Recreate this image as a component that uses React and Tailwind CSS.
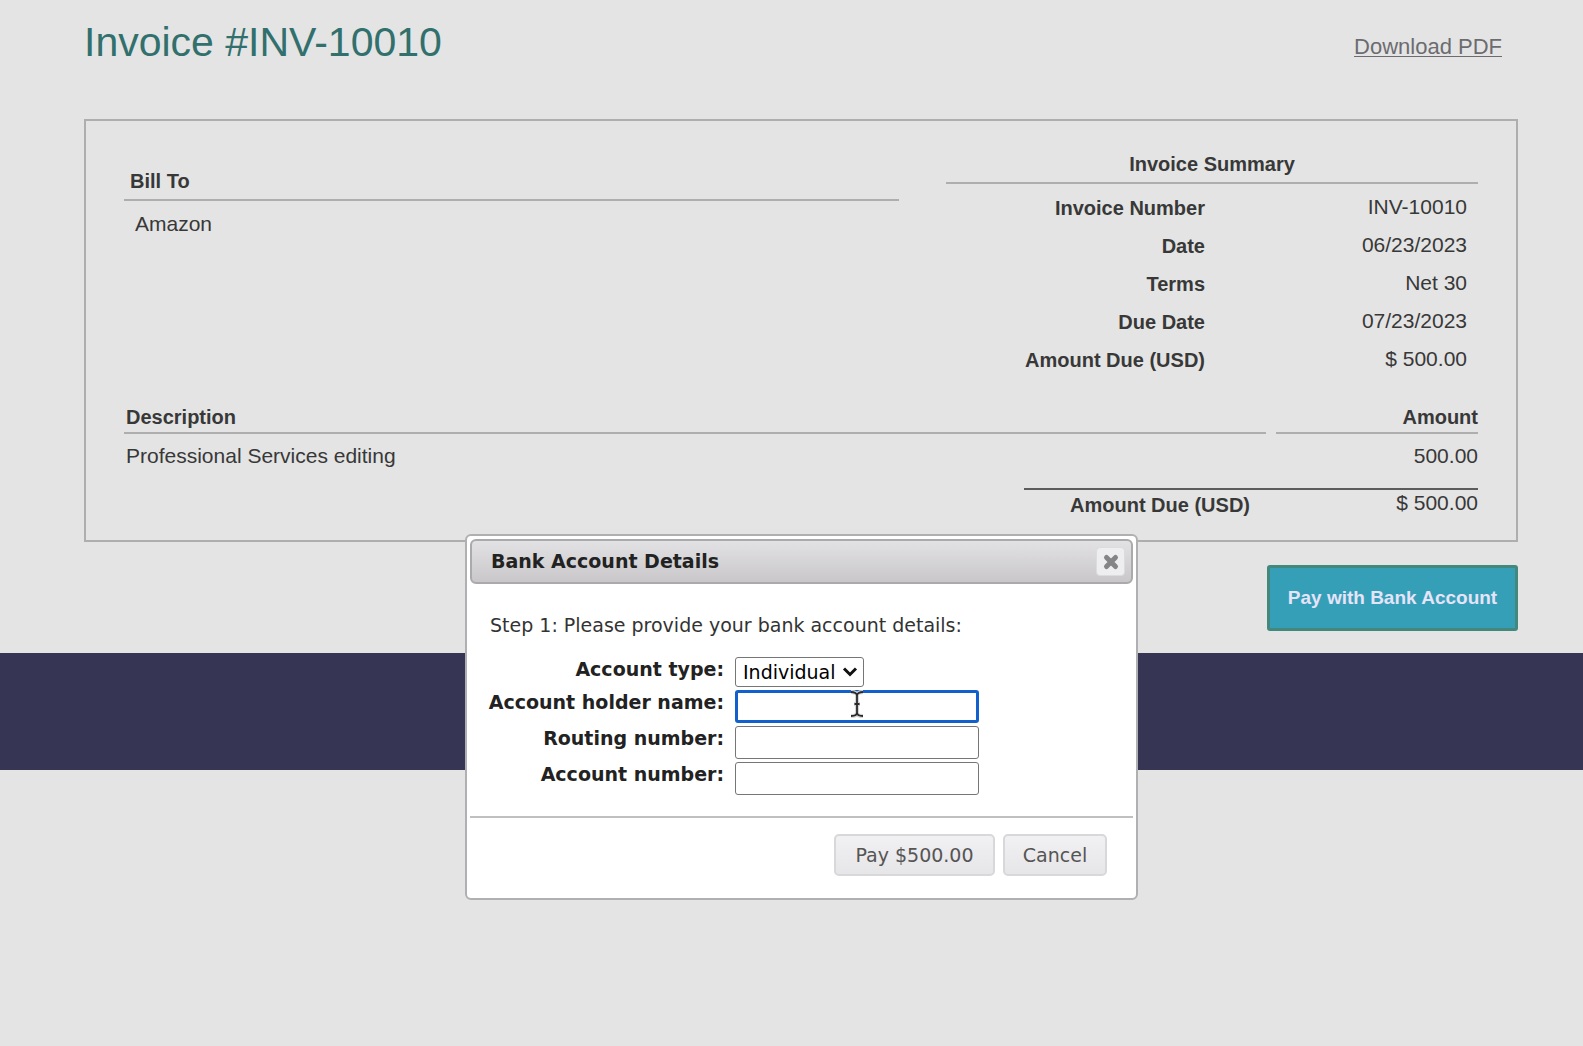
const summary = [
  ['Invoice Number', 'INV-10010'],
  ['Date', '06/23/2023'],
  ['Terms', 'Net 30'],
  ['Due Date', '07/23/2023'],
  ['Amount Due (USD)', '$ 500.00'],
];

function Header() {
  return (
    <header className="flex items-start justify-between pr-4 pt-[18px]">
      <h1 className="text-[41px] leading-[48px] text-[#31706d]">Invoice #INV-10010</h1>
      <a href="#pdf" className="mt-4 text-[22px] leading-[26px] text-[#6c6c70] underline decoration-1 underline-offset-2">
        Download PDF
      </a>
    </header>
  );
}

function InvoiceSummary() {
  return (
    <section className="w-[532px] shrink-0">
      <h2 className="border-b-2 border-[#aeaeae] pb-[5px] text-center text-[20px] font-bold leading-[26px]">
        Invoice Summary
      </h2>
      <table className="mt-1 w-full border-collapse">
        <tbody>
          {summary.map(([label, value]) => (
            <tr key={label} className="h-[38px]">
              <th scope="row" className="w-[259px] p-0 pt-[2px] text-right text-[20px] font-bold leading-[24px]">
                {label}
              </th>
              <td className="p-0 pr-[11px] text-right leading-[24px]">{value}</td>
            </tr>
          ))}
        </tbody>
      </table>
    </section>
  );
}

function LineItems() {
  return (
    <div className="mt-[26px]">
      <table className="w-full border-collapse leading-[26px]">
        <thead>
          <tr className="text-[20px]">
            <th scope="col" className="border-b-2 border-[#aeaeae] p-0 pb-0.5 pl-0.5 text-left">Description</th>
            <td className="w-[10px] p-0"></td>
            <th scope="col" className="w-[202px] border-b-2 border-[#aeaeae] p-0 pb-0.5 text-right">Amount</th>
          </tr>
        </thead>
        <tbody>
          <tr>
            <td className="p-0 pl-0.5 pt-[9px]">Professional Services editing</td>
            <td className="p-0"></td>
            <td className="p-0 pt-[9px] text-right">500.00</td>
          </tr>
        </tbody>
      </table>
      <div className="ml-auto mt-[19px] flex w-[454px] border-t-2 border-[#5c5c5c]">
        <strong className="w-[226px] pt-0.5 text-right text-[20px] leading-[26px]">Amount Due (USD)</strong>
        <span className="flex-1 text-right leading-[26px]">$ 500.00</span>
      </div>
    </div>
  );
}

function IBeam() {
  return (
    <svg className="absolute left-[115px] top-0" width="14" height="28" viewBox="0 0 14 28" fill="none" aria-hidden="true">
      <path d="M1 2c3 0 6 .8 6 3.500v17c0 2.700-3 3.500-6 3.500M13 2c-3 0-6 .8-6 3.500v17c0 2.700 3 3.500 6 3.500M4 14h6" stroke="#d4d4d4" strokeWidth="4" />
      <path d="M1 2c3 0 6 .8 6 3.500v17c0 2.700-3 3.500-6 3.500M13 2c-3 0-6 .8-6 3.500v17c0 2.700 3 3.500 6 3.500M4.500 14h5" stroke="#2a2a2a" strokeWidth="1.800" />
    </svg>
  );
}

const inputBase = 'block h-[33px] w-[244px] rounded-[3px] bg-white px-2 outline-none';

function BankDialog() {
  return (
    <div
      role="dialog"
      aria-labelledby="dialog-title"
      className="absolute left-1/2 top-[534px] ml-[-336px] w-[673px] rounded-[6px] border-2 border-[#b0b0b2] bg-white p-[3px] pb-0 font-['DejaVu_Sans',Verdana,sans-serif] text-[19px] text-[#333]"
    >
      <div className="flex h-[45px] items-center justify-between rounded-[6px] border-2 border-[#aaaaac] bg-linear-to-b from-[#e2e1e3] to-[#c9c7ca] pl-[19px] pr-1.5">
        <h2 id="dialog-title" className="text-[19px] font-bold text-[#222]">Bank Account Details</h2>
        <button type="button" aria-label="Close" className="flex size-[29px] items-center justify-center rounded-[4px] border border-[#dcdcde] bg-[#eeeef0]">
          <svg width="18" height="18" viewBox="0 0 18 18" aria-hidden="true">
            <path d="M4.500 4.500l9 9M13.500 4.500l-9 9" stroke="#858587" strokeWidth="5" strokeLinecap="round" />
          </svg>
        </button>
      </div>

      <form onSubmit={(e) => e.preventDefault()}>
        <div className="px-3 pt-7">
          <p className="pl-2 leading-[26px]">Step 1: Please provide your bank account details:</p>
          <div className="mt-[19px] grid grid-cols-[242px_auto] items-start justify-start gap-x-[11px] gap-y-[3px] text-right font-bold leading-[24px] text-[#222]">
            <label htmlFor="type">Account type:</label>
            <div className="relative h-[30px] w-[129px] font-normal">
              <select id="type" className="h-full w-full appearance-none rounded-[3px] border border-[#767676] bg-white pl-[7px] text-[19px] text-black">
                <option>Individual</option>
                <option>Company</option>
              </select>
              <svg className="pointer-events-none absolute right-[6px] top-[9px]" width="16" height="12" viewBox="0 0 16 12" fill="none" aria-hidden="true">
                <path d="M2 2.500l6 6 6-6" stroke="#111" strokeWidth="3" />
              </svg>
            </div>
            <label htmlFor="holder">Account holder name:</label>
            <div className="relative">
              <input id="holder" type="text" className={inputBase + ' border-[3px] border-[#1160cc]'} />
              <IBeam />
            </div>
            <label htmlFor="routing">Routing number:</label>
            <input id="routing" type="text" className={inputBase + ' border border-[#767676]'} />
            <label htmlFor="account">Account number:</label>
            <input id="account" type="text" className={inputBase + ' border border-[#767676]'} />
          </div>
        </div>
        <div className="mt-[21px] flex justify-end gap-2 border-t-2 border-[#c0c0c0] px-[26px] pb-[22px] pt-4 text-[#555]">
          <button type="submit" className="h-[42px] w-[161px] rounded-[5px] border-2 border-[#d8d8da] bg-linear-to-b from-[#f1f0f2] to-[#e6e5e7]">
            Pay $500.00
          </button>
          <button type="button" className="h-[42px] w-[104px] rounded-[5px] border-2 border-[#d8d8da] bg-linear-to-b from-[#f1f0f2] to-[#e6e5e7]">
            Cancel
          </button>
        </div>
      </form>
    </div>
  );
}

export default function App() {
  return (
    <div className="min-h-screen bg-[#e4e4e4] font-['Liberation_Sans',Arial,sans-serif] text-[21px] text-[#383838]">
      <main className="relative">
        <div className="pl-[84px] pr-[65px]">
          <Header />
          <div className="mt-[53px] border-2 border-[#aeaeae] px-[38px] pb-[22px] pt-[30px]">
            <div className="flex items-start justify-between gap-[47px]">
              <section className="mt-[18px] flex-1">
                <h2 className="border-b-2 border-[#aeaeae] pb-[5px] pl-1.5 text-[20px] font-bold leading-[25px]">Bill To</h2>
                <p className="pl-[11px] pt-2.5 leading-[26px]">Amazon</p>
              </section>
              <InvoiceSummary />
            </div>
            <LineItems />
          </div>
          <div className="mt-[23px] flex justify-end">
            <button type="button" className="h-[66px] w-[251px] rounded-[3px] border-[3px] border-[#43887c] bg-[#359fb7] text-[19px] font-bold text-[#e6e4f8]">
              Pay with Bank Account
            </button>
          </div>
        </div>
        <div className="pointer-events-none absolute inset-0 pl-[84px] pr-[65px]">
          <div className="pointer-events-auto relative">
            <BankDialog />
          </div>
        </div>
      </main>
      <footer className="mt-[22px] h-[117px] bg-[#363553]"></footer>
    </div>
  );
}
